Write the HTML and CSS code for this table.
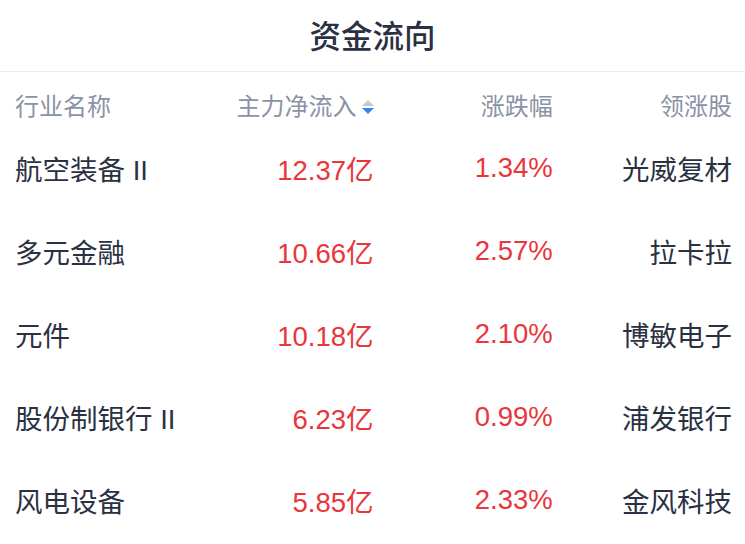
FILE: index.html
```html
<!DOCTYPE html>
<html lang="zh">
<head>
<meta charset="utf-8">
<title>资金流向</title>
<link rel="stylesheet" href="styles.css">
</head>
<body>
<div class="panel">
  <div class="title">资金流向</div>
  <div class="grid head">
    <div class="c1">行业名称</div>
    <div class="c num sortable">主力净流入<span class="sort"><span class="up"></span><span class="down"></span></span></div>
    <div class="c num">涨跌幅</div>
    <div class="c num">领涨股</div>
  </div>
  <div class="grid row">
    <div class="c1 name">航空装备 II</div>
    <div class="c num red">12.37亿</div>
    <div class="c num red">1.34%</div>
    <div class="c num name">光威复材</div>
  </div>
  <div class="grid row">
    <div class="c1 name">多元金融</div>
    <div class="c num red">10.66亿</div>
    <div class="c num red">2.57%</div>
    <div class="c num name">拉卡拉</div>
  </div>
  <div class="grid row">
    <div class="c1 name">元件</div>
    <div class="c num red">10.18亿</div>
    <div class="c num red">2.10%</div>
    <div class="c num name">博敏电子</div>
  </div>
  <div class="grid row">
    <div class="c1 name">股份制银行 II</div>
    <div class="c num red">6.23亿</div>
    <div class="c num red">0.99%</div>
    <div class="c num name">浦发银行</div>
  </div>
  <div class="grid row">
    <div class="c1 name">风电设备</div>
    <div class="c num red">5.85亿</div>
    <div class="c num red">2.33%</div>
    <div class="c num name">金风科技</div>
  </div>
</div>
</body>
</html>
```
FILE: styles.css
```css
html, body {
  margin: 0;
  padding: 0;
  background: #ffffff;
}
body {
  font-family: "Liberation Sans", "Noto Sans CJK SC", sans-serif;
  width: 745px;
  height: 544px;
  overflow: hidden;
}
.title {
  height: 71px;
  line-height: 68px;
  text-align: center;
  font-size: 31.5px;
  font-weight: 500;
  color: #2a3142;
  border-bottom: 1px solid #ececec;
  font-family: "Noto Sans CJK SC", sans-serif;
}
.grid {
  display: grid;
  grid-template-columns: 1fr 1fr 1fr 1fr;
  padding: 0 13px 0 15px;
}
.head {
  padding-top: 22px;
  padding-bottom: 6px;
  line-height: 26px;
  font-size: 24px;
  color: #8a92a5;
}
.num {
  text-align: right;
}
.sortable {
  display: flex;
  justify-content: flex-end;
  align-items: center;
}
.sort {
  display: flex;
  flex-direction: column;
  gap: 2px;
  margin-left: 5px;
  margin-right: 0;
}
.up {
  width: 0;
  height: 0;
  border-left: 6px solid transparent;
  border-right: 6px solid transparent;
  border-bottom: 6px solid #c3c7cf;
}
.down {
  width: 0;
  height: 0;
  border-left: 6px solid transparent;
  border-right: 6px solid transparent;
  border-top: 6px solid #3d7ff2;
}
.row {
  height: 83px;
  align-items: center;
  font-size: 27.5px;
}
.name {
  color: #2a3142;
}
.red {
  color: #e8363a;
}
```
